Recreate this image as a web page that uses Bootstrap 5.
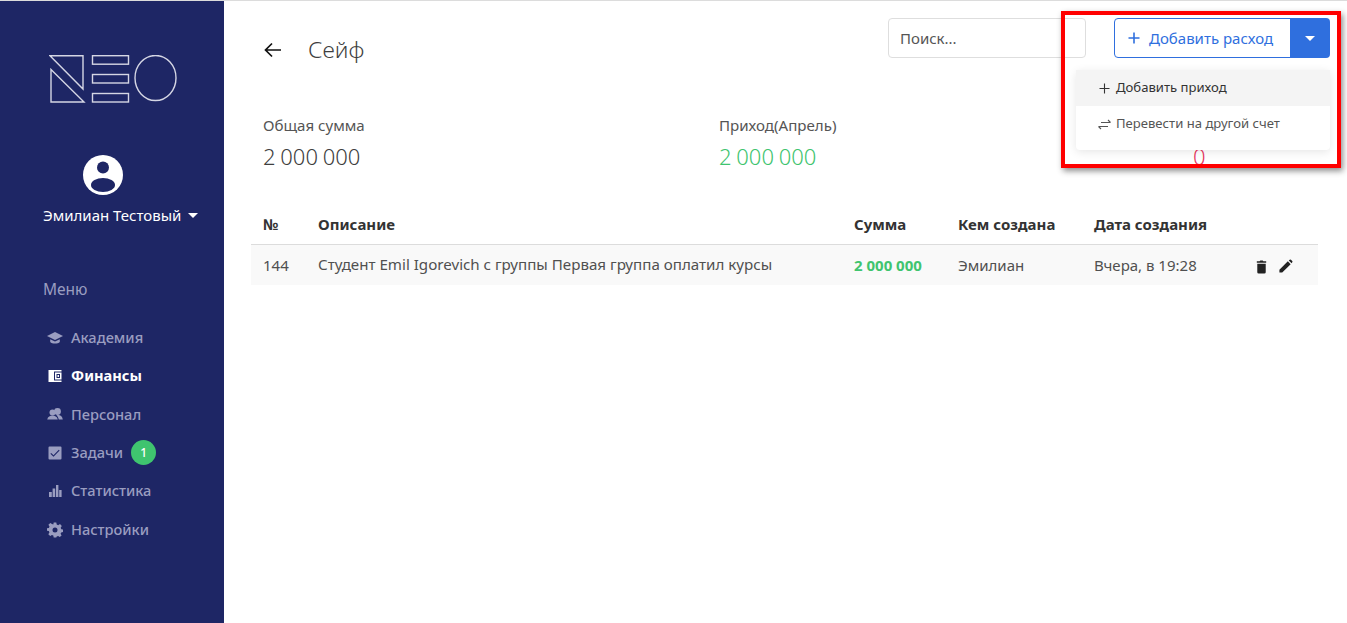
<!DOCTYPE html>
<html lang="ru">
<head>
    <meta charset="UTF-8">
    <meta name="viewport" content="width=device-width, initial-scale=1.0">
    <title>Сейф</title>
    <link href="https://cdn.jsdelivr.net/npm/bootstrap@5.3.0/dist/css/bootstrap.min.css" rel="stylesheet">
    <script src="https://cdn.jsdelivr.net/npm/bootstrap@5.3.0/dist/js/bootstrap.bundle.min.js"></script>
    <style>
        html, body { height: 623px; overflow: hidden; }
        body { font-family: "Noto Sans", "Open Sans", sans-serif; color: #3f3f3f; background: #fff; }
        .app-shell { height: 623px; border-top: 1px solid #dcdcdc; position: relative; }

        .side-bar { width: 224px; flex: none; background: #1e2665; color: #fff; }
        .logo-box { padding: 54px 0 0 49px; height: 154px; }
        .user-box { height: 91px; }
        .user-pic { margin-left: 83px; }
        .user-name { font-size: 15px; line-height: 20px; margin: 10px 0 0 43px; }
        .caret-down { display: inline-block; border-left: 5px solid transparent; border-right: 5px solid transparent; border-top: 5px solid currentColor; }
        .user-name .caret-down { margin-left: 7px; vertical-align: 3px; }
        .menu-title { font-size: 15.5px; line-height: 20px; color: #9a9dc0; padding: 33px 0 0 43px; margin-bottom: 19.5px; }
        .menu-link { height: 38.4px; padding-left: 47px; font-size: 14.6px; color: #9a9dc0; font-weight: 500; text-decoration: none; }
        .menu-link svg { width: 16px; height: 16px; margin-right: 8px; flex: none; fill: currentColor; }
        .menu-link.is-active { color: #fff; font-weight: 700; }
        .menu-count { width: 25px; height: 25px; margin-left: 8px; border-radius: 50%; background: #3fc46f; color: #fff; font-size: 12px; }

        .main-area { min-width: 0; padding: 17px 17px 0 39px; }
        .top-row { height: 40px; }
        .title-wrap { margin-top: 17px; }
        .back-arrow { width: 20px; height: 20px; margin-right: 25px; }
        .page-title { font-size: 22.8px; line-height: 30px; font-weight: 300; color: #3f3f3f; margin: 0; }
        .search-box { width: 198px; height: 40px; font-size: 15px; border-color: #dedede; border-radius: 4px; padding-left: 11px; margin-right: 28px; color: #555; }
        .search-box::placeholder { color: #555; }
        .add-main { width: 177px; height: 40px; padding: 0 0 0 12px; font-size: 15px; color: #2f6fde; border-color: #2f6fde; border-radius: 4px 0 0 4px; background: #fff; }
        .add-main svg { width: 14px; height: 14px; margin-right: 8px; }
        .add-drop { width: 40px; height: 40px; padding: 0; background: #2f6fde; border: 0; border-radius: 0 4px 4px 0; color: #fff; }

        .stat-row { margin-top: 57px; }
        .stat-col { width: 456px; flex: none; }
        .stat-col.last-stat { width: 160px; }
        .stat-label { font-size: 15.1px; line-height: 20px; color: #555; height: 20px; }
        .stat-value { font-size: 22px; line-height: 30px; margin-top: 6px; color: #3f3f3f; font-weight: 300; word-spacing: -1px; }
        .text-income { color: #3fc46f; }
        .text-outcome { color: #e8365d; padding-left: 18px; }

        .money-table { table-layout: fixed; width: 1067px; margin: 34px 0 0 -12px; font-size: 15px; }
        .money-table th { font-weight: 700; color: #333; height: 39px; padding: 0 0 0 12px; vertical-align: middle; border-bottom: 1px solid #dcdcdc; }
        .money-table td { height: 41px; padding: 0 0 0 12px; vertical-align: middle; background: #f9f9f9; color: #505050; border: 0; }
        .money-table .col-a { width: 55px; }
        .money-table .col-b { width: 536px; }
        .money-table .col-c { width: 104px; }
        .money-table .col-d { width: 136px; }
        .money-table .col-e { width: 160px; }
        .money-table .desc-cell { font-size: 15.13px; }
        .sum-cell { font-weight: 700; color: #3fc46f !important; }
        .row-tools svg { width: 15px; height: 15px; fill: #222; margin-right: 5px; }

        .drop-panel { position: absolute; left: 1076px; top: 69px; width: 254px; height: 80px; background: #fff; border-radius: 4px; box-shadow: 0 2px 10px rgba(0,0,0,.1); z-index: 5; }
        .drop-item { height: 36px; padding-left: 22px; font-size: 13.1px; color: #555; text-decoration: none; }
        .drop-item svg { width: 13px; height: 13px; margin-right: 5px; flex: none; }
        .drop-item.is-hover { background: #f4f4f4; color: #333; }

        .red-frame { position: absolute; left: 1061px; top: 10px; width: 280px; height: 157px; border: 4px solid #f00; box-shadow: 2px 3px 6px rgba(0,0,0,.45); z-index: 6; pointer-events: none; }
    </style>
</head>
<body>
    <div class="app-shell d-flex">
        <!-- Sidebar -->
        <aside class="side-bar">
            <div class="logo-box">
                <svg width="130" height="50" viewBox="0 0 130 50" fill="none" stroke="#d5d6e4" stroke-width="1.4">
                    <path d="M1 .7H34V34Z"/>
                    <path d="M2 14.5 35 47H2Z"/>
                    <rect x="43.5" y=".7" width="36" height="8.5"/>
                    <rect x="43.5" y="19.5" width="36" height="8.5"/>
                    <rect x="43.5" y="38.5" width="36" height="8.5"/>
                    <ellipse cx="106.5" cy="23" rx="20.5" ry="22.5"/>
                </svg>
            </div>
            <div class="user-box">
                <svg width="40" height="40" viewBox="0 0 40 40" class="d-block user-pic">
                    <circle cx="20" cy="20" r="20" fill="#fff"/>
                    <circle cx="20" cy="12.5" r="6" fill="#1e2665"/>
                    <ellipse cx="20" cy="30" rx="12" ry="7" fill="#1e2665"/>
                </svg>
                <div class="user-name">Эмилиан Тестовый<span class="caret-down"></span></div>
            </div>
            <div class="menu-title">Меню</div>
            <nav class="d-flex flex-column">
                <a class="menu-link d-flex align-items-center" href="#">
                    <svg viewBox="0 0 16 16"><path d="M8 2 0 6 8 10 16 6ZM3.2 9.2V12C5 14 11 14 12.8 12V9.2L8 11.6Z"/></svg>Академия
                </a>
                <a class="menu-link is-active d-flex align-items-center" href="#">
                    <svg viewBox="0 0 16 16"><path fill-rule="evenodd" d="M1.5 2H14.5V3.5H7V12.5H14.5V14H1.5ZM8 4.5H14.5V11.5H8ZM9.5 6V10H13V6Z"/><rect x="10.5" y="7" width="1.5" height="2"/></svg>Финансы
                </a>
                <a class="menu-link d-flex align-items-center" href="#">
                    <svg viewBox="0 0 16 16"><circle cx="10.5" cy="5.5" r="3.4"/><circle cx="5.5" cy="6.5" r="3"/><path d="M.2 13.5C1 10.5 3 9.5 5.5 9.5S10 10.5 10.8 13.5ZM11 9c2.2 0 4.2 1 4.8 4.5H11.8C11.4 11.5 10.5 10 9.3 9.2Z"/></svg>Персонал
                </a>
                <a class="menu-link d-flex align-items-center" href="#">
                    <svg viewBox="0 0 16 16"><path fill-rule="evenodd" d="M2.5 1.5H13.5A1 1 0 0 1 14.5 2.5V13.5A1 1 0 0 1 13.5 14.5H2.5A1 1 0 0 1 1.5 13.5V2.5A1 1 0 0 1 2.5 1.5ZM4.2 8 3.4 8.8 6.5 11.8 12.6 5.6 11.8 4.8 6.5 10.2Z"/></svg>Задачи<span class="menu-count d-flex align-items-center justify-content-center">1</span>
                </a>
                <a class="menu-link d-flex align-items-center" href="#">
                    <svg viewBox="0 0 16 16"><path d="M2 9H4.8V14H2ZM5.6 5.5H8.2V14H5.6ZM9 2H11.4V14H9ZM12.2 7H14.6V14H12.2Z"/></svg>Статистика
                </a>
                <a class="menu-link d-flex align-items-center" href="#">
                    <svg viewBox="0 0 16 16"><path fill-rule="evenodd" d="M6.7 1H9.3L9.7 3 11.2 3.7 13 2.6 14.8 4.5 13.7 6.2 14.3 7.7 16 8.1V10.5L14.2 10.9 13.6 12.3 14.6 14 12.8 15.4 11.1 14.4 9.7 15 9.3 16H6.7L6.3 14.1 4.9 13.5 3.2 14.6 1.3 12.7 2.4 11 1.8 9.6 0 9.2V6.8L1.9 6.4 2.5 5 1.4 3.3 3.3 1.5 5 2.6 6.3 2.9ZM8 6A2.5 2.5 0 1 0 8 11 2.5 2.5 0 1 0 8 6Z" transform="translate(0 -.5)"/></svg>Настройки
                </a>
            </nav>
        </aside>

        <!-- Main -->
        <main class="main-area flex-grow-1">
            <div class="top-row d-flex align-items-start">
                <div class="title-wrap d-flex align-items-center">
                    <svg class="back-arrow" viewBox="0 0 20 20" fill="none" stroke="#111" stroke-width="1.7"><path d="M18 10H2.5M9 3.5 2.5 10 9 16.5"/></svg>
                    <h1 class="page-title">Сейф</h1>
                </div>
                <div class="ms-auto d-flex">
                    <input class="form-control search-box" type="text" placeholder="Поиск...">
                    <div class="btn-group">
                        <button class="btn add-main d-flex align-items-center" type="button">
                            <svg viewBox="0 0 14 14" fill="none" stroke="currentColor" stroke-width="1.6"><path d="M7 1.5V12.5M1.5 7H12.5"/></svg>Добавить расход
                        </button>
                        <button class="btn add-drop d-flex align-items-center justify-content-center" type="button"><span class="caret-down"></span></button>
                    </div>
                </div>
            </div>

            <div class="stat-row d-flex">
                <div class="stat-col">
                    <div class="stat-label">Общая сумма</div>
                    <div class="stat-value">2 000 000</div>
                </div>
                <div class="stat-col">
                    <div class="stat-label">Приход(Апрель)</div>
                    <div class="stat-value text-income">2 000 000</div>
                </div>
                <div class="stat-col last-stat">
                    <div class="stat-label"></div>
                    <div class="stat-value text-outcome">0</div>
                </div>
            </div>

            <table class="table money-table">
                <colgroup>
                    <col class="col-a"><col class="col-b"><col class="col-c"><col class="col-d"><col class="col-e"><col>
                </colgroup>
                <thead>
                    <tr><th>№</th><th>Описание</th><th>Сумма</th><th>Кем создана</th><th>Дата создания</th><th></th></tr>
                </thead>
                <tbody>
                    <tr>
                        <td>144</td>
                        <td class="desc-cell">Студент Emil Igorevich с группы Первая группа оплатил курсы</td>
                        <td class="sum-cell">2 000 000</td>
                        <td>Эмилиан</td>
                        <td>Вчера, в 19:28</td>
                        <td class="row-tools">
                            <svg viewBox="0 0 16 16"><path d="M3.5 5H12.5V14A1.5 1.5 0 0 1 11 15.5H5A1.5 1.5 0 0 1 3.5 14ZM3 2.5H6L6.7 1.5H9.3L10 2.5H13V4H3Z"/></svg>
                            <svg viewBox="0 0 16 16"><path d="M1.5 11.5 10.5 2.5 13.5 5.5 4.5 14.5H1.5ZM11.5 1.5 12.5.8A1 1 0 0 1 13.8.8L15.2 2.2A1 1 0 0 1 15.2 3.5L14.5 4.5Z"/></svg>
                        </td>
                    </tr>
                </tbody>
            </table>
        </main>

        <!-- Dropdown shown open -->
        <div class="drop-panel">
            <a class="drop-item is-hover d-flex align-items-center" href="#">
                <svg viewBox="0 0 13 13" fill="none" stroke="currentColor" stroke-width="1.1"><path d="M6.5 1.5V11.5M1.5 6.5H11.5"/></svg>Добавить приход
            </a>
            <a class="drop-item d-flex align-items-center" href="#">
                <svg viewBox="0 0 13 13" fill="none" stroke="currentColor" stroke-width="1.1"><path d="M3 4.5H12.5M10 2 12.5 4.5M.5 8.5H10M3 11 .5 8.5"/></svg>Перевести на другой счет
            </a>
        </div>

        <!-- Red annotation frame -->
        <div class="red-frame"></div>
    </div>
</body>
</html>
